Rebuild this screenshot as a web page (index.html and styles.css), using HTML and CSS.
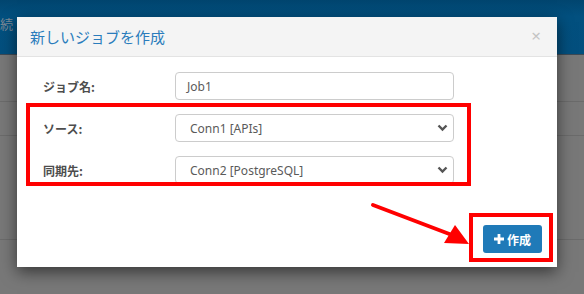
FILE: index.html
```html
<!DOCTYPE html>
<html lang="ja">
<head>
  <meta charset="UTF-8">
  <title>新しいジョブを作成</title>
  <link rel="stylesheet" href="styles.css">
</head>
<body>

<div class="page">
  <div class="topbar"><span class="crumb">続</span></div>
  <div class="list">
    <div class="list-row first"></div>
    <div class="list-row second"></div>
    <div class="list-row third"></div>
  </div>
</div>

<div class="modal">
  <div class="modal-header">
    <h4 class="modal-title">新しいジョブを作成</h4>
    <span class="close">&times;</span>
  </div>
  <div class="modal-body">
    <div class="form-group">
      <label>ジョブ名:</label>
      <div class="control">Job1</div>
    </div>
    <div class="form-group">
      <label>ソース:</label>
      <div class="control select">
        <span>Conn1 [APIs]</span>
        <svg class="chevron" width="11" height="8" viewBox="0 0 11 8"><polyline points="1.5,1.5 5.5,5.5 9.5,1.5" fill="none" stroke="#555" stroke-width="2.4"/></svg>
      </div>
    </div>
    <div class="form-group">
      <label>同期先:</label>
      <div class="control select">
        <span>Conn2 [PostgreSQL]</span>
        <svg class="chevron" width="11" height="8" viewBox="0 0 11 8"><polyline points="1.5,1.5 5.5,5.5 9.5,1.5" fill="none" stroke="#555" stroke-width="2.4"/></svg>
      </div>
    </div>
  </div>
  <div class="modal-footer">
    <button class="btn-create">
      <svg width="10" height="10" viewBox="0 0 10 10"><path d="M3.6 0h2.8v3.6H10v2.8H6.4V10H3.6V6.4H0V3.6h3.6z" fill="#fff"/></svg>
      作成
    </button>
  </div>
</div>

<!-- annotations -->
<div class="mark mark-fields"></div>
<div class="mark mark-create"></div>
<svg class="arrow" width="584" height="294" viewBox="0 0 584 294">
  <line x1="373" y1="205" x2="452" y2="235" stroke="#f00" stroke-width="4" stroke-linecap="round"/>
  <polygon points="444,243 455,225 469,244" fill="#f00"/>
</svg>

</body>
</html>
```

FILE: styles.css
```css
body {
  margin: 0;
  font-family: "Noto Sans", "Noto Sans CJK JP", sans-serif;
  background-color: #787878;
  overflow: hidden;
}
.page {
  height: 294px;
}
.topbar {
  height: 55px;
  background: linear-gradient(#01456f, #02507f 30%, #034f7e);
  border-bottom: 1px solid #3e4a55;
  box-sizing: border-box;
}
.crumb {
  display: inline-block;
  margin-top: 14px;
  margin-left: 0;
  font-family: "Noto Sans CJK JP", sans-serif;
  font-size: 13px;
  color: #7c8996;
}
.list-row {
  border-bottom: 1px solid #6b6b6b;
}
.list-row.first {
  height: 46px;
}
.list-row.second {
  height: 33px;
}
.list-row.third {
  height: 103px;
}

.modal {
  position: absolute;
  left: 17px;
  top: 17px;
  width: 540px;
  height: 250px;
  background-color: #fff;
  box-shadow: 0 5px 15px rgba(0, 0, 0, 0.55);
}
.modal-header {
  height: 40px;
  box-sizing: border-box;
  background-color: #f4f4f4;
  border-bottom: 1px solid #e3e3e3;
  display: flex;
  align-items: center;
  justify-content: space-between;
  padding: 0 16px 0 13px;
}
.modal-title {
  margin: 0;
  font-family: "Noto Sans CJK JP", sans-serif;
  font-size: 15px;
  font-weight: 400;
  color: #2a7cbc;
}
.close {
  font-size: 17px;
  color: #c4c4c4;
  margin-top: -3px;
}
.modal-body {
  padding: 15px 103px 0 26px;
}
.form-group {
  display: flex;
  align-items: center;
  margin-bottom: 14px;
}
.form-group label {
  width: 132px;
  font-family: "Noto Sans CJK JP", sans-serif;
  font-size: 12px;
  font-weight: 700;
  color: #4d4d4d;
}
.control {
  flex: 1;
  height: 28px;
  box-sizing: border-box;
  border: 1px solid #ccc;
  border-radius: 4px;
  padding: 0 11px;
  display: flex;
  align-items: center;
  font-size: 12px;
  color: #5a5a5a;
}
.control.select {
  justify-content: space-between;
  padding: 0 5px 0 14px;
}
.modal-footer {
  position: absolute;
  right: 15px;
  bottom: 14px;
}
.btn-create {
  width: 59px;
  height: 28px;
  border: none;
  border-radius: 3px;
  background-color: #1f7ab8;
  color: #fff;
  font-family: "Noto Sans CJK JP", sans-serif;
  font-size: 12px;
  font-weight: 700;
  display: flex;
  align-items: center;
  justify-content: center;
  gap: 3px;
  padding: 0;
}

.mark {
  position: absolute;
  border: 4px solid #f00;
  box-sizing: border-box;
}
.mark-fields {
  left: 26px;
  top: 103px;
  width: 445px;
  height: 83px;
}
.mark-create {
  left: 469px;
  top: 213px;
  width: 84px;
  height: 49px;
}
.arrow {
  position: absolute;
  left: 0;
  top: 0;
}
```
